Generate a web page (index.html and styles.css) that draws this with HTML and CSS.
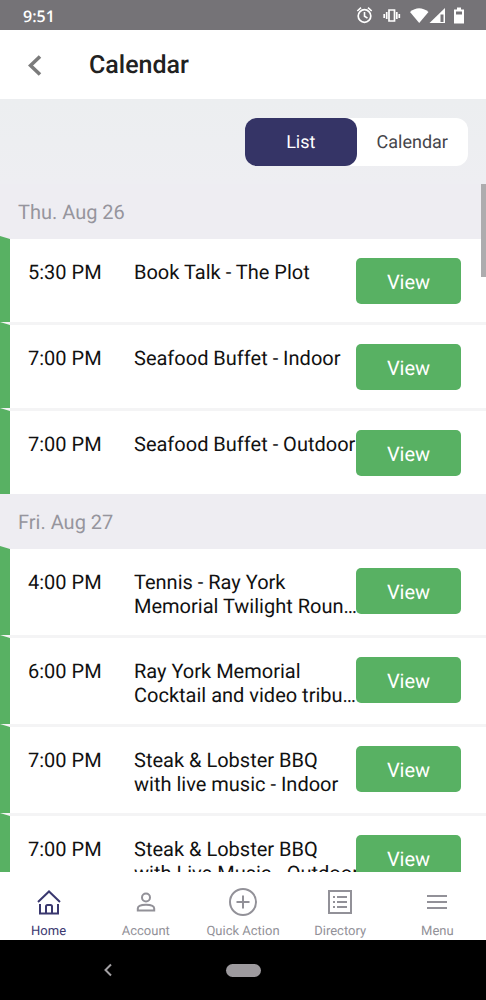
FILE: index.html
```html
<!DOCTYPE html>
<html lang="en">
<head>
<meta charset="utf-8">
<meta name="viewport" content="width=device-width, initial-scale=1">
<title>Calendar</title>
<link rel="stylesheet" href="styles.css">
</head>
<body>
<div class="app">
  <div class="status">
    <span class="clock">9:51</span>
    <svg class="status-icons" viewBox="0 0 110 20" fill="none" stroke="#fff" aria-hidden="true">
      <circle cx="8.500" cy="11" r="6.300" stroke-width="1.700"/>
      <path d="M8.500 7v4.200l3 2M1.300 6l3.700-3.300M15.700 6L12 2.700" stroke-width="1.600"/>
      <path d="M33 5h5.500v11H33zM30.700 7v7M40.800 7v7M28.200 9v4M43.300 9v4" stroke-width="1.700"/>
      <path d="M54 7q9-7.500 18.500 0L63.200 18z" fill="#fff" stroke="none"/>
      <path d="M73.500 18L89 3v15z" fill="#fff" stroke="none"/>
      <path d="M84.500 9.500h3V17h-3z" fill="#757377" stroke="none"/>
      <path d="M98 4.500h3v-2h4v2h3v14H98z" fill="#fff" stroke="none"/>
      <path d="M100 6.500h6v3h-6z" fill="#757377" stroke="none"/>
    </svg>
  </div>
  <header class="topbar">
    <button class="back" aria-label="Back"><svg width="14" height="22" viewBox="0 0 14 22" fill="none" stroke="#7b7b7b" stroke-width="3.600"><path d="M12 1.500L2.500 10.500l9.500 9"/></svg></button>
    <h1 class="title">Calendar</h1>
  </header>
  <div class="switcher">
    <div class="segments">
      <button class="segment selected" aria-pressed="true">List</button>
      <button class="segment" aria-pressed="false">Calendar</button>
    </div>
  </div>
  <main class="events">
    <div class="thumb"></div>
    <h2 class="day">Thu. Aug 26</h2>
    <div class="event first"><time class="time">5:30 PM</time><p class="name">Book Talk - The Plot</p><button class="view">View</button></div>
    <div class="event"><time class="time">7:00 PM</time><p class="name">Seafood Buffet - Indoor</p><button class="view">View</button></div>
    <div class="event"><time class="time">7:00 PM</time><p class="name">Seafood Buffet - Outdoor</p><button class="view">View</button></div>
    <h2 class="day">Fri. Aug 27</h2>
    <div class="event tall first"><time class="time">4:00 PM</time><p class="name">Tennis - Ray York<br>Memorial Twilight Roun…</p><button class="view">View</button></div>
    <div class="event tall"><time class="time">6:00 PM</time><p class="name">Ray York Memorial<br>Cocktail and video tribu…</p><button class="view">View</button></div>
    <div class="event tall"><time class="time">7:00 PM</time><p class="name">Steak &amp; Lobster BBQ<br>with live music - Indoor</p><button class="view">View</button></div>
    <div class="event tall"><time class="time">7:00 PM</time><p class="name">Steak &amp; Lobster BBQ<br>with Live Music - Outdoor</p><button class="view">View</button></div>
  </main>
  <nav class="tabs">
    <a class="tab current" href="#home"><svg class="icon" viewBox="0 0 30 30"><path d="M4 15L15 4.500 26 15M6 17v9.500h18V17M12 26.500v-7q0-1.500 1.500-1.500h3q1.500 0 1.500 1.500v7"/></svg>Home</a>
    <a class="tab" href="#account"><svg class="icon" viewBox="0 0 30 30"><circle cx="15" cy="10.500" r="4"/><path d="M6.800 23.500V21.500c0-5 16.400-5 16.400 0v2z"/></svg>Account</a>
    <a class="tab" href="#quick"><svg class="icon" viewBox="0 0 30 30"><circle cx="15" cy="15" r="13"/><path d="M15 8.500v13M8.500 15h13"/></svg>Quick Action</a>
    <a class="tab" href="#directory"><svg class="icon" viewBox="0 0 30 30"><path d="M4 4h22v22H4zM12 10h10M12 15h10M12 20h10M8 10h2M8 15h2M8 20h2"/></svg>Directory</a>
    <a class="tab" href="#menu"><svg class="icon" viewBox="0 0 30 30"><path d="M5 9h20M5 15h20M5 21h20"/></svg>Menu</a>
  </nav>
  <div class="system">
    <button class="sys-back" aria-label="System back"><svg width="8" height="14" viewBox="0 0 8 14" fill="none" stroke="#a3a1a4" stroke-width="2"><path d="M7 1.500L1.500 7 7 12.500"/></svg></button>
    <button class="pill" aria-label="System home"></button>
  </div>
</div>
</body>
</html>
```
FILE: styles.css
```css
* { box-sizing: border-box; }
body { margin: 0; font-family: Roboto, "Liberation Sans", sans-serif; color: #111; background: #fff; text-rendering: geometricPrecision; }
button { font: inherit; text-rendering: inherit; border: 0; padding: 0; margin: 0; background: none; }
h1, h2, p { margin: 0; font-weight: 400; }
svg { display: block; }

.app { display: flex; flex-direction: column; height: 100vh; }

.status { display: flex; align-items: center; justify-content: space-between; height: 30px; flex: none; padding: 2px 20px 0 23px; background: #757377; color: #fff; }
.clock { font-family: "Open Sans", Roboto, sans-serif; font-size: 16px; font-weight: 600; line-height: 28px; }
.status-icons { width: 110px; height: 20px; margin-top: -2px; }

.topbar { display: flex; align-items: center; gap: 47px; height: 69px; flex: none; padding: 2px 28px 0; }
.back { display: flex; }
.title { font-size: 25px; font-weight: 500; line-height: 30px; color: #212121; }

.switcher { display: flex; justify-content: flex-end; padding: 19px 18px 18px; flex: none; background: linear-gradient(#eceef0, #eeeef2); }
.segments { display: grid; grid-template-columns: 1fr 1fr; width: 223px; height: 48px; background: #fff; border-radius: 12px; }
.segment { border-radius: 12px; font-size: 18px; line-height: 24px; padding-top: 2px; color: #45454a; }
.segment.selected { background: #353466; color: #fff; }

.events { position: relative; flex: 1; min-height: 0; overflow: hidden; }
.thumb { position: absolute; top: 0; right: 0; width: 5px; height: 93px; background: #adacae; }
.day { height: 52px; padding: 15px 18px 0; font-size: 20px; line-height: 26px; color: #96959d; background: #eeedf2; }
.event { display: flex; align-items: flex-start; min-height: 86px; padding: 19px 25px 0 18px; border-left: 10px solid #58b163; border-top: 3px solid #f4f4f5; }
.event.first { border-top-color: #eeedf2; }
.event.tall { min-height: 89px; }
.time { flex: none; width: 106px; font-size: 20px; line-height: 24px; padding-top: 2px; }
.name { flex: 1; min-width: 0; padding-top: 2px; font-size: 20px; line-height: 24px; white-space: nowrap; }
.view { flex: none; width: 105px; height: 46px; padding-top: 2px; border-radius: 5px; background: #58b163; color: #fff; font-size: 20px; line-height: 24px; }

.tabs { display: grid; grid-template-columns: repeat(5, 1fr); flex: none; height: 68px; padding-top: 15px; background: #fff; }
.tab { display: flex; flex-direction: column; align-items: center; gap: 7px; font-size: 13px; line-height: 16px; color: #929198; text-decoration: none; white-space: nowrap; }
.tab.current { color: #3a386f; }
.icon { width: 30px; height: 30px; fill: none; stroke: currentColor; stroke-width: 2; }

.system { display: grid; grid-template-columns: 1fr 35px 1fr; align-items: center; flex: none; height: 60px; background: #000; }
.sys-back { display: flex; justify-self: center; margin-right: 10px; }
.pill { height: 13px; border-radius: 7px; background: #9d9a9e; }
```
